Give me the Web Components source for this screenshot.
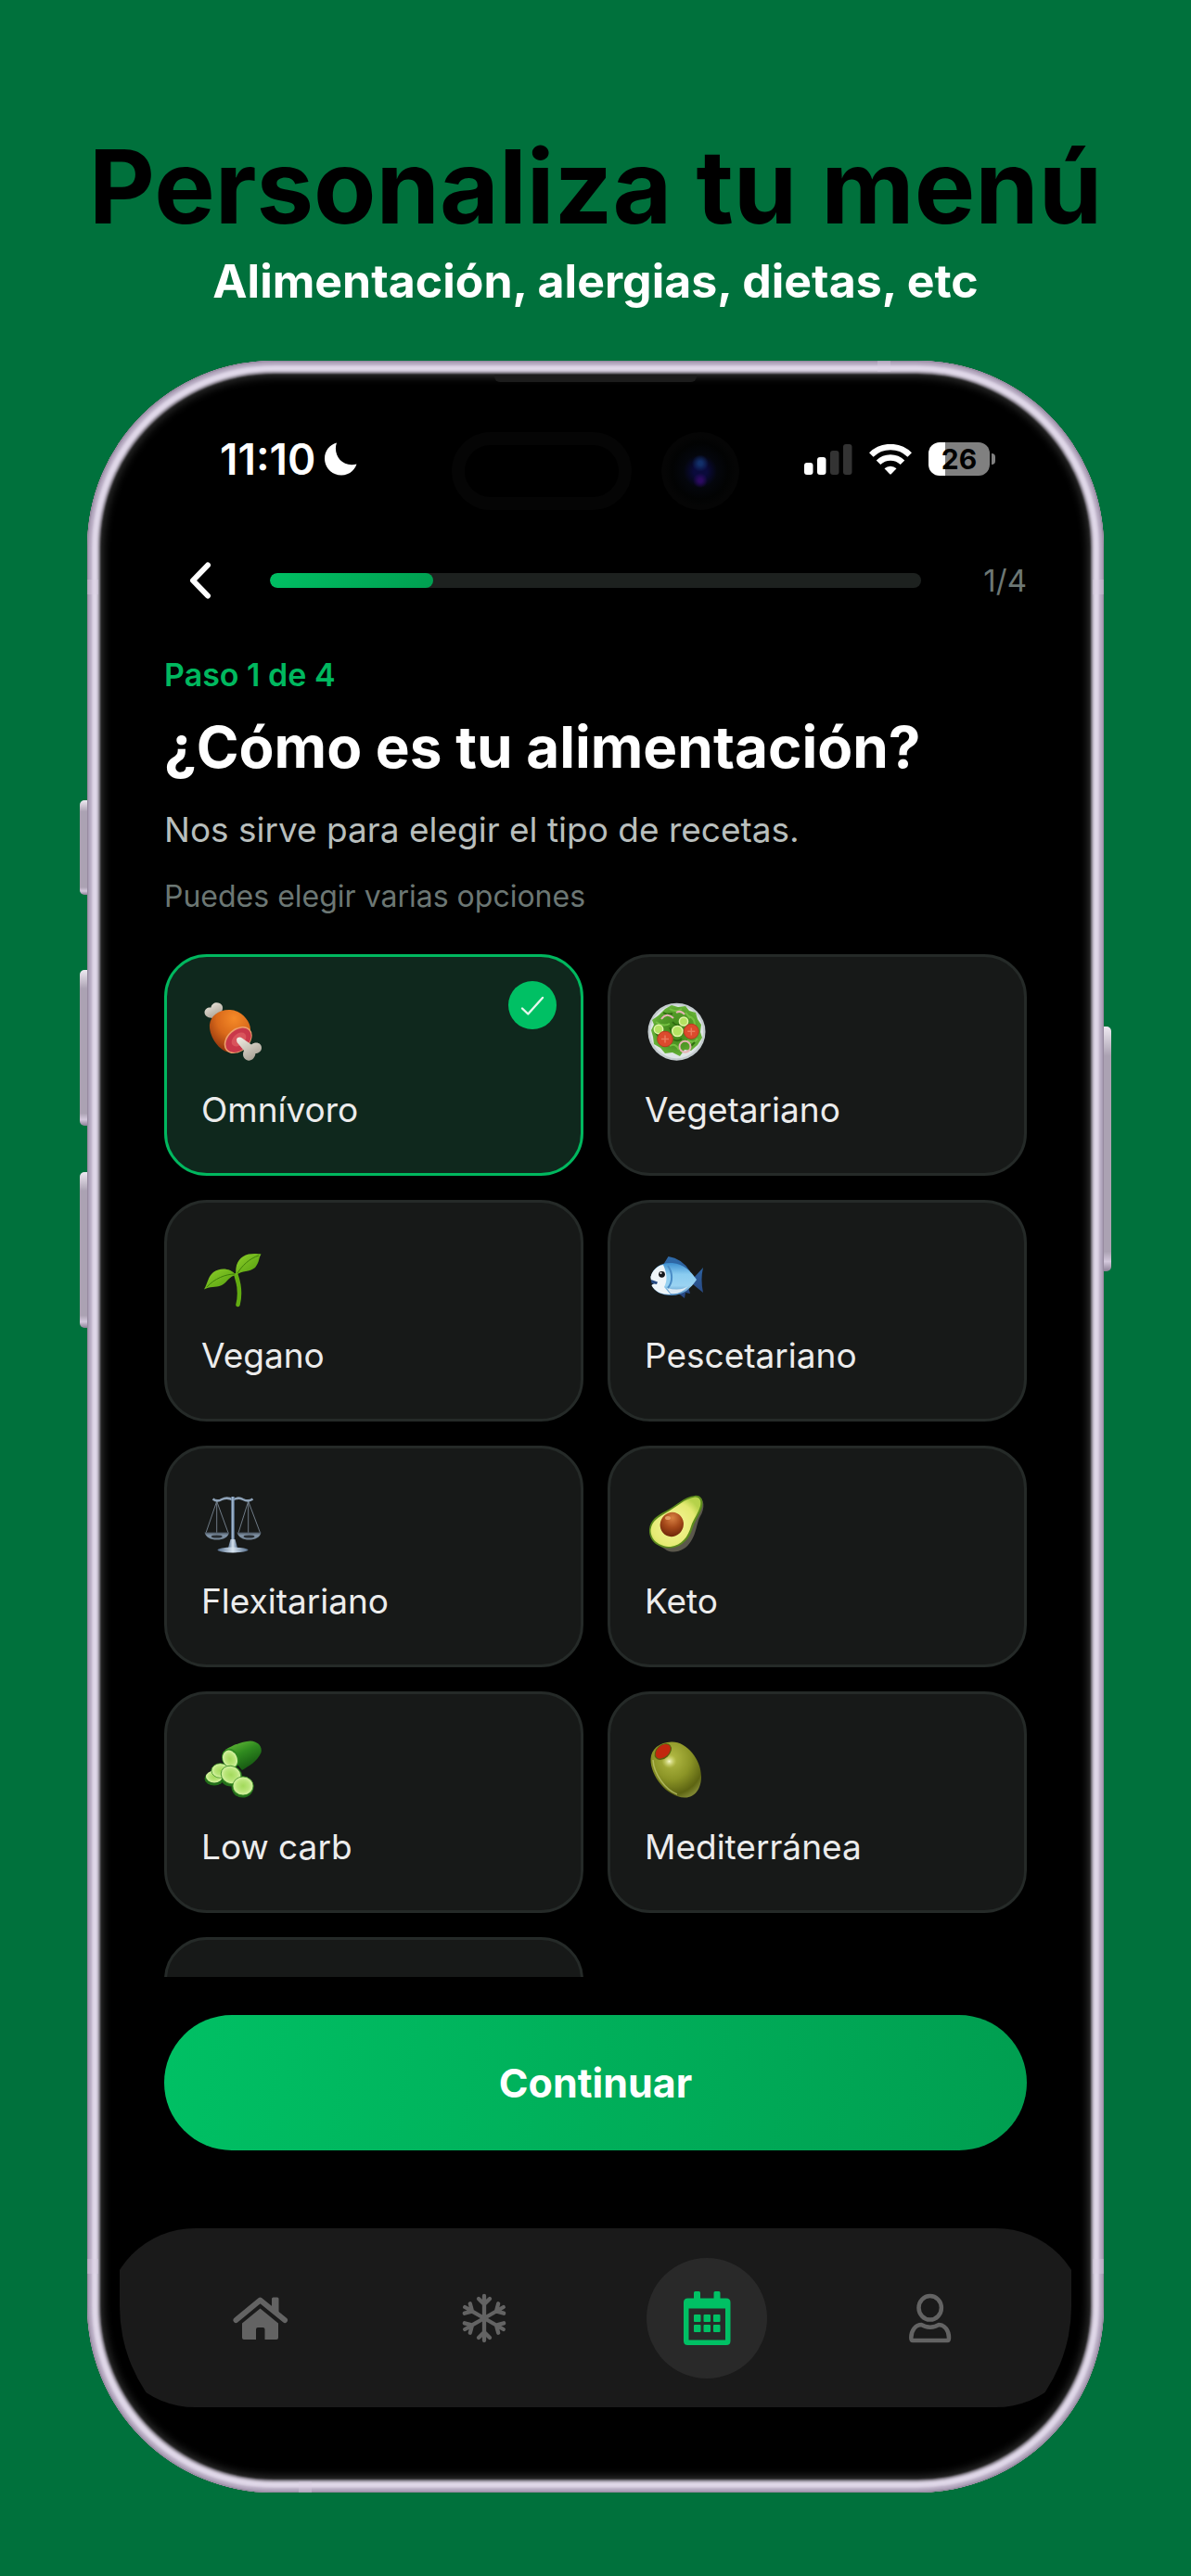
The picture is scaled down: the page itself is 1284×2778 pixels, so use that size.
<!DOCTYPE html>
<html lang="es">
<head>
<meta charset="utf-8">
<meta name="viewport" content="width=device-width, initial-scale=1">
<title>Personaliza tu menú</title>
<style>
  html, body { margin: 0; }
  body {
    min-height: 100vh;
    background: #00713c;
    color: #fff;
    font-family: Inter, "Open Sans", sans-serif;
    --green: #00c064;
    --green-deep: #009e50;
    --card: #171918;
    --line: #252a28;
    --muted: #6c7774;
  }
</style>
</head>
<body>
<promo-poster>
  <span slot="title">Personaliza tu menú</span>
  <span slot="subtitle">Alimentación, alergias, dietas, etc</span>
  <phone-frame>
    <status-bar time="11:10" battery="26"></status-bar>
    <step-header step="1" total="4"></step-header>
    <step-intro>
      <span slot="eyebrow">Paso 1 de 4</span>
      <span slot="title">¿Cómo es tu alimentación?</span>
      <span slot="lead">Nos sirve para elegir el tipo de recetas.</span>
      <span slot="hint">Puedes elegir varias opciones</span>
    </step-intro>
    <option-grid>
      <diet-option icon="meat" checked>Omnívoro</diet-option>
      <diet-option icon="salad">Vegetariano</diet-option>
      <diet-option icon="sprout">Vegano</diet-option>
      <diet-option icon="fish">Pescetariano</diet-option>
      <diet-option icon="scales">Flexitariano</diet-option>
      <diet-option icon="avocado">Keto</diet-option>
      <diet-option icon="cucumber">Low carb</diet-option>
      <diet-option icon="olive">Mediterránea</diet-option>
      <diet-option></diet-option>
    </option-grid>
    <primary-button>Continuar</primary-button>
    <tab-bar></tab-bar>
  </phone-frame>
</promo-poster>

<script>
const define = (name, html, setup) => {
  const template = document.createElement('template');
  template.innerHTML = '<style>*{box-sizing:border-box}svg{display:block}</style>' + html;
  customElements.define(name, class extends HTMLElement {
    constructor() {
      super();
      this.attachShadow({ mode: 'open' }).append(template.content.cloneNode(true));
    }
    connectedCallback() {
      if (setup && !this.ready) { this.ready = true; setup(this, this.shadowRoot); }
    }
  });
};

define('promo-poster', `
  <style>
    :host { display: block; padding: 131px 94px 90px; }
    header { text-align: center; margin: 0 -60px 54px; }
    h1 { margin: 0; font-size: 110px; line-height: 140px; font-weight: 700; color: #000; }
    p { margin: 0; font-size: 50px; line-height: 64px; font-weight: 700; }
  </style>
  <header>
    <h1><slot name="title"></slot></h1>
    <p><slot name="subtitle"></slot></p>
  </header>
  <main><slot></slot></main>
`);

define('phone-frame', `
  <style>
    :host { display: block; position: relative; }
    .body {
      position: relative;
      padding: 35px;
      border-radius: 201px;
      background: #000;
      box-shadow:
        inset 0 0 2px 1px #8d8197,
        inset 0 0 3px 5px #b3a7be,
        inset 0 0 3px 12px #e0d8e9,
        inset 0 0 2px 14px #77727c,
        inset 0 0 10px 17px #303030;
    }
    .screen {
      display: flex; flex-direction: column;
      padding: 0 48px 57px;
      border-radius: 166px;
      overflow: hidden;
    }
    .key {
      position: absolute; left: -8px; width: 9px;
      border-radius: 5px 0 0 5px;
      background: linear-gradient(#efeaf2, #aba2b3 12%, #aba2b3 92%, #d3c8dc 96%, #8d8197);
    }
    .key.right { left: auto; right: -8px; border-radius: 0 5px 5px 0; }
    .action { top: 474px; height: 102px; }
    .up { top: 657px; height: 168px; }
    .down { top: 875px; height: 168px; }
    .power { top: 718px; height: 264px; }
    .speaker {
      position: absolute; top: 15px; left: 50%; width: 218px; height: 8px;
      transform: translateX(-50%);
      border-radius: 0 0 6px 6px; background: #1c1c1c;
    }
    .band { position: absolute; background: #d9cee3; opacity: .35; }
    .band.h { width: 14px; height: 12px; }
    .band.v { width: 12px; height: 16px; }
    .island {
      position: absolute; top: 77px; left: 393px; width: 194px; height: 84px;
      border: 14px solid #050505; border-radius: 42px;
    }
    .camera {
      position: absolute; top: 77px; left: 619px; width: 84px; height: 84px;
      border-radius: 50%;
      background:
        radial-gradient(circle at 50% 40%, #12306a 0 2px, transparent 9px),
        radial-gradient(circle at 50% 62%, #2c0a60 0 2px, transparent 8px),
        radial-gradient(circle, #0a0a3c 0 7px, #04060c 18px, #020303 30px, #050505 38px);
    }
  </style>
  <i class="key action"></i><i class="key up"></i><i class="key down"></i><i class="key right power"></i>
  <div class="body">
    <i class="speaker"></i>
    <i class="band h" style="top:0;right:230px"></i>
    <i class="band h" style="bottom:0;left:228px"></i>
    <i class="band v" style="top:236px;left:0"></i>
    <i class="band v" style="top:236px;right:0"></i>
    <i class="band v" style="bottom:236px;left:0"></i>
    <i class="band v" style="bottom:236px;right:0"></i>
    <i class="island"></i><i class="camera"></i>
    <div class="screen"><slot></slot></div>
  </div>
`);

define('status-bar', `
  <style>
    :host {
      display: flex; align-items: center; justify-content: space-between;
      height: 142px; padding: 0 34px 0 60px; position: relative;
    }
    .time { display: flex; align-items: center; gap: 9px; font-size: 46px; line-height: 52px; font-weight: 600; }
    .icons { display: flex; align-items: center; gap: 18px; }
    .battery { display: flex; align-items: center; gap: 2px; }
    .cell {
      width: 66px; height: 36px; border-radius: 12px;
      background: linear-gradient(90deg, #fff 27%, #808080 27%);
      color: #000; font-size: 30px; line-height: 36px; font-weight: 700; text-align: center;
    }
    .tip { width: 4px; height: 12px; border-radius: 0 4px 4px 0; background: #808080; }
  </style>
  <div class="time"><span id="time"></span>
    <svg width="36" height="36" viewBox="0 0 36 36" aria-hidden="true"><path fill="#fff" d="M14 .5C9.500 13 19.500 27.500 35.500 23.500C33 31 26.500 35.500 19 35.500C9 35.500 1 27.500 1 17.500C1 9.500 6 2.500 14 .5Z"/></svg>
  </div>
  <div class="icons">
    <svg width="52" height="33" viewBox="0 0 52 33" aria-hidden="true">
      <rect x="0" y="20" width="9.500" height="13" rx="3" fill="#fff"/><rect x="14" y="14" width="9.500" height="19" rx="3" fill="#fff"/>
      <rect x="28" y="7" width="9.500" height="26" rx="3" fill="#333"/><rect x="42" y="0" width="9.500" height="33" rx="3" fill="#333"/>
    </svg>
    <svg width="46" height="33" viewBox="0 0 46 33" aria-hidden="true">
      <g fill="none" stroke="#fff" stroke-width="6.500"><path d="M2.300 11.500A29.700 29.700 0 0 1 43.700 11.500"/><path d="M10 19.700A18.600 18.600 0 0 1 36 19.700"/></g>
      <path fill="#fff" d="M16.500 26.300A9.600 9.600 0 0 1 29.500 26.300L24 32Q23 33 22 32Z"/>
    </svg>
    <div class="battery"><div class="cell" id="level"></div><i class="tip"></i></div>
  </div>
`, (host, root) => {
  root.getElementById('time').textContent = host.getAttribute('time');
  root.getElementById('level').textContent = host.getAttribute('battery');
});

define('step-header', `
  <style>
    :host { display: flex; align-items: center; gap: 36px; height: 120px; }
    button {
      width: 78px; height: 78px; padding: 0; border: 0; background: none;
      display: grid; place-items: center; cursor: pointer;
    }
    .track { flex: 1; height: 16px; border-radius: 8px; background: #1d211f; overflow: hidden; }
    .fill { height: 16px; border-radius: 8px; background: linear-gradient(135deg, var(--green), var(--green-deep)); }
    .count { width: 78px; text-align: right; font-size: 33px; line-height: 40px; color: var(--muted); }
  </style>
  <button type="button" aria-label="Atrás">
    <svg width="24" height="40" viewBox="0 0 24 40"><path d="M20 3.500L4 20L20 36.500" fill="none" stroke="#fff" stroke-width="6" stroke-linecap="round" stroke-linejoin="round"/></svg>
  </button>
  <div class="track" role="progressbar"><div class="fill"></div></div>
  <span class="count"></span>
`, (host, root) => {
  const step = +host.getAttribute('step'), total = +host.getAttribute('total');
  root.querySelector('.fill').style.width = (step / total * 100) + '%';
  root.querySelector('.count').textContent = step + '/' + total;
});

define('step-intro', `
  <style>
    :host { display: block; padding: 21px 0 42px; white-space: nowrap; }
    p, h2 { margin: 0; }
    .eyebrow { font-size: 34px; line-height: 42px; font-weight: 600; color: #00b85f; }
    h2 { margin-top: 17px; font-size: 62px; line-height: 80px; font-weight: 700; }
    .lead { margin-top: 25px; font-size: 37px; line-height: 48px; color: #b8bebc; }
    .hint { margin-top: 28px; font-size: 32px; line-height: 40px; color: var(--muted); }
  </style>
  <p class="eyebrow"><slot name="eyebrow"></slot></p>
  <h2><slot name="title"></slot></h2>
  <p class="lead"><slot name="lead"></slot></p>
  <p class="hint"><slot name="hint"></slot></p>
`);

define('option-grid', `
  <style>
    :host {
      display: grid; grid-template-columns: 1fr 1fr; gap: 26px;
      align-content: start;
      max-height: 1103px; overflow: hidden auto; scrollbar-width: none;
    }
  </style>
  <slot></slot>
`);

const art = {
  meat: `
    <defs>
      <radialGradient id="m1" cx=".6" cy=".2" r=".85"><stop offset="0" stop-color="#f58a28"/><stop offset=".5" stop-color="#d9691a"/><stop offset="1" stop-color="#8a2f0c"/></radialGradient>
      <linearGradient id="m2" x1="0" y1="0" x2=".6" y2="1"><stop offset="0" stop-color="#f4efe6"/><stop offset="1" stop-color="#a9a296"/></linearGradient>
    </defs>
    <path fill="url(#m2)" d="M17 19C13 21 4 20 3.500 14C3.500 10 7 8 10.500 8.500C11 4 16 2 20 4C24 6 24 11 21 14Z"/>
    <path fill="url(#m1)" d="M30 11C41 10 54 23 53 33C53 46 42 57.500 31 57C19 56 8 39 9 27C10 18 18 11 30 11Z"/>
    <ellipse cx="39.700" cy="43.500" rx="17" ry="12" transform="rotate(-42 39.700 43.500)" fill="#eda06a"/>
    <ellipse cx="40" cy="43.800" rx="15.600" ry="10.800" transform="rotate(-42 40 43.800)" fill="#c9384a"/>
    <ellipse cx="40.500" cy="43" rx="9" ry="6" transform="rotate(-42 40.500 43)" fill="#d9545c"/>
    <path fill="url(#m2)" d="M38 43C39 40 42 40 44 41.500L54 48.500C59 44.500 65 47 65 52C65 56 61 58 58.500 58C58 63 54 66.500 50 65.500C45 64 44 59 46 55L38.500 46Z"/>`,
  salad: `
    <defs><radialGradient id="s1"><stop offset="0" stop-color="#3e8417"/><stop offset=".7" stop-color="#529b28"/><stop offset="1" stop-color="#67b338"/></radialGradient></defs>
    <circle cx="34.500" cy="34.700" r="31" fill="#c4ccce"/><circle cx="34.500" cy="34.700" r="28.500" fill="#dfe5e6"/>
    <path fill="url(#s1)" d="M22 10L29 6L36 8L44 7L48 12L55 14L57 21L61 27L60 35L62 41L57 49L50 55L43 54L38 61L30 57L22 58L17 52L10 48L9 40L7 33L10 27L8 22L15 17Z"/>
    <g fill="none" stroke="#74c041" stroke-width="2"><path d="M27 10Q33 14 40 10M48 18Q54 20 54 27M12 24Q20 30 27 26M27 50Q33 46 37 54M46 44Q54 48 57 42M44 14L49 20"/></g>
    <g fill="none" stroke="#2f6d10" stroke-width="2"><path d="M20 14Q25 17 30 15M30 24Q34 29 38 27M12 36L16 41M31 43Q36 46 40 42M50 50L54 46M27 30L30 36"/></g>
    <g fill="none" stroke="#e6b4b4" stroke-width="2"><path d="M18 21Q24 13 31 20M34 14Q39 11 43 16"/><circle cx="43.500" cy="50.700" r="6"/></g>
    <g fill="#b4e262" stroke="#e2f5a6" stroke-width="1.500"><circle cx="15" cy="32" r="4.700"/><circle cx="35.300" cy="34" r="5.600"/><circle cx="42" cy="23.500" r="4.600"/></g>
    <g fill="#dc4a2d" stroke="#b93a20" stroke-width="1"><circle cx="22" cy="42.500" r="8.300"/><circle cx="50.300" cy="34.300" r="8"/></g>
    <g stroke="#ea7a5c" stroke-width="1.500"><path d="M22 38.500V46.500M18 42.500H26M50.300 30.500V38.500M46.300 34.300H54.300"/></g>`,
  sprout: `
    <defs><linearGradient id="p1" x1="0" y1="0" x2="1" y2="1"><stop offset="0" stop-color="#8fd12b"/><stop offset="1" stop-color="#4f9a0c"/></linearGradient></defs>
    <path d="M37.500 32C41 42 42 54 39.500 64" fill="none" stroke="#63ad12" stroke-width="4.500" stroke-linecap="round"/>
    <path fill="url(#p1)" d="M37.500 32C36 20 41 12 51 9.500C56 8.500 61 9 64.500 9.500C61.500 14 63 18 58 24C52 29 44 27 37.500 32Z"/>
    <path fill="url(#p1)" d="M37.500 32C31 24 20 24 13 29C7 34 7 41 3 47.500C9 44 15 46 22 43C28 40 30 33 37.500 32Z"/>
    <g fill="none" stroke="#3f800a" stroke-width="1"><path d="M39 30C44 22 52 14 62 11M36 31C26 31 14 36 6 45"/></g>`,
  fish: `
    <defs>
      <linearGradient id="f1" x1="0" y1="0" x2="0" y2="1"><stop offset="0" stop-color="#3d8fd0"/><stop offset=".35" stop-color="#8accf0"/><stop offset=".7" stop-color="#9ad3f2"/><stop offset="1" stop-color="#4a86bd"/></linearGradient>
      <linearGradient id="f2" x1="0" y1="0" x2="0" y2="1"><stop offset="0" stop-color="#2f6cab"/><stop offset="1" stop-color="#27447e"/></linearGradient>
    </defs>
    <path fill="url(#f2)" d="M52 36L63 24Q60 37 63 51L52 42ZM20 21L25.500 12Q40 14 49 28ZM34 50L43 57L44 51L49 52L47 45Z"/>
    <path fill="url(#f1)" d="M6.500 34C9 24 18 18 30 19C42 20 50 28 56 37C50 46 42 54 29 54C18 54 11 50 7.500 43L12 40L7 38Z"/>
    <path fill="#eef5f9" d="M6.500 34C8 28 13 22 20 21C24 30 25 38 21 45L28 53C18 53 11 50 7.500 43L12 40L7 38Z"/>
    <path fill="#dce9f3" d="M24 46Q38 50 47 44Q38 54 28 52Z"/>
    <path d="M25 22C30 29 31 39 25 46" fill="none" stroke="#4a8cc6" stroke-width="2"/>
    <path fill="#264a82" d="M7 37L14 39.500L13 42L7.500 41Z"/><circle cx="18.500" cy="31.300" r="3.400" fill="#15171b"/><circle cx="17.500" cy="30" r="1" fill="#fff"/>`,
  scales: `
    <defs>
      <linearGradient id="b1" x1="0" y1="0" x2="1" y2="0"><stop offset="0" stop-color="#536c8a"/><stop offset=".5" stop-color="#d7e4f0"/><stop offset="1" stop-color="#536c8a"/></linearGradient>
      <linearGradient id="b2" x1="0" y1="0" x2="0" y2="1"><stop offset="0" stop-color="#47525d"/><stop offset=".4" stop-color="#8193a6"/><stop offset="1" stop-color="#6f8091"/></linearGradient>
    </defs>
    <g fill="none" stroke="#6f7b87" stroke-width="1"><path d="M16.700 11L5 45M16.700 11V45M16.700 11L29 45M50.700 11L40 45M50.700 11V45M50.700 11L63.500 45"/></g>
    <path d="M12.500 8.500Q17 12 22 9Q28 6 34 9.500Q40 6 45 9Q51 12 55.500 8.500" fill="none" stroke="#8fa3b8" stroke-width="2.500"/>
    <path fill="#6d88a8" d="M32.300 6H35.700V54H32.300Z"/><path fill="#a9bed3" d="M33.200 6H34.500V54H33.200Z"/>
    <path fill="url(#b1)" d="M31.500 52H36.500L39 61H29Z"/><ellipse cx="34" cy="63.500" rx="16.500" ry="2.900" fill="url(#b1)"/>
    <path fill="url(#b2)" d="M3.500 44.500H30C29 50 24 52.500 16.700 52.500C10 52.500 5 50 3.500 44.500ZM38.500 44.500H64.500C63.500 50 58 52.500 51.500 52.500C45 52.500 40 50 38.500 44.500Z"/>
    <ellipse cx="16.700" cy="49" rx="6" ry="1.600" fill="#272c31"/><ellipse cx="51.500" cy="49" rx="6" ry="1.600" fill="#272c31"/>`,
  avocado: `
    <defs>
      <radialGradient id="a1" cx=".45" cy=".55" r=".6"><stop offset="0" stop-color="#f7f59a"/><stop offset=".75" stop-color="#e4ea72"/><stop offset="1" stop-color="#b6d24a"/></radialGradient>
      <radialGradient id="a2" cx=".4" cy=".25" r=".8"><stop offset="0" stop-color="#d98243"/><stop offset=".5" stop-color="#a5491a"/><stop offset="1" stop-color="#6b2408"/></radialGradient>
    </defs>
    <path fill="#5b584c" d="M57 5.500C65 8 65 19 60 27C56 34 56 45 50 54C44 64 33 68 24 64L12 56Z"/>
    <path fill="#5b8a1c" d="M54 5C60 4 64 9 62 17C60 25 55 30 52 39C49 50 42 60 28 61.500C14 62 4 53 5 41C6 31 14 26 22 22C34 16 42 6 54 5Z"/>
    <path fill="url(#a1)" d="M54 6.500C59 6 61.500 10 60 16C58 24 53 29 50 38C47 49 40 58.500 28 60C15 60 6 52 6.500 41.500C8 32 15 28 23 23.500C35 17 43 8 54 6.500Z"/>
    <ellipse cx="29.300" cy="36" rx="12.500" ry="13.300" transform="rotate(25 29.300 36)" fill="url(#a2)"/>
    <ellipse cx="25" cy="29" rx="3" ry="2" fill="#eba972" opacity=".8"/>`,
  cucumber: `
    <defs>
      <linearGradient id="c1" x1=".1" y1="0" x2=".7" y2="1"><stop offset="0" stop-color="#69bf3b"/><stop offset=".45" stop-color="#2f8a1f"/><stop offset="1" stop-color="#125010"/></linearGradient>
      <radialGradient id="c2"><stop offset="0" stop-color="#a3da5b"/><stop offset=".6" stop-color="#b8e579"/><stop offset="1" stop-color="#d9f3a6"/></radialGradient>
    </defs>
    <path fill="url(#c1)" d="M26 14C34 9 44 5 53 4.500C61 5 66 10 64.500 17C60 27 52 31 44 36Z"/>
    <ellipse cx="31.500" cy="23.500" rx="9" ry="11" transform="rotate(-25 31.500 23.500)" fill="#2f8a1f"/>
    <ellipse cx="31" cy="24" rx="7.600" ry="9.700" transform="rotate(-25 31 24)" fill="url(#c2)"/>
    <g fill="#23701a"><ellipse cx="14" cy="45" rx="10.500" ry="7.500"/><ellipse cx="20.500" cy="38" rx="10.500" ry="9"/><ellipse cx="32" cy="42.500" rx="12" ry="11"/><ellipse cx="44.500" cy="54" rx="12" ry="11.500"/></g>
    <ellipse cx="14" cy="43" rx="9" ry="6.500" fill="url(#c2)"/>
    <ellipse cx="20.500" cy="36.500" rx="9.500" ry="7.800" fill="url(#c2)" stroke="#3d8e25" stroke-width=".8"/>
    <ellipse cx="32" cy="41" rx="11" ry="9.500" transform="rotate(25 32 41)" fill="url(#c2)" stroke="#3d8e25" stroke-width=".8"/>
    <ellipse cx="45" cy="53" rx="11" ry="10" fill="url(#c2)" stroke="#3d8e25" stroke-width=".8"/>`,
  olive: `
    <defs>
      <radialGradient id="o1" cx=".42" cy=".3" r=".75"><stop offset="0" stop-color="#b3bb45"/><stop offset=".5" stop-color="#8b9426"/><stop offset=".85" stop-color="#5d6412"/><stop offset="1" stop-color="#7d8530"/></radialGradient>
      <radialGradient id="o2"><stop offset="0" stop-color="#fdffd8" stop-opacity=".9"/><stop offset="1" stop-color="#d6dc70" stop-opacity="0"/></radialGradient>
    </defs>
    <path fill="url(#o1)" d="M29 5.500C45 5 61 24 61 43C61 56 54 66 43 65.500C24 65 6 42 6.500 24C7 13 16 6 29 5.500Z"/>
    <path d="M9 25C10 40 22 57 35 62" fill="none" stroke="#c3ca73" stroke-width="1.500" opacity=".7"/>
    <ellipse cx="26.500" cy="26.500" rx="8" ry="7.500" fill="url(#o2)"/>
    <ellipse cx="19.800" cy="16" rx="10.500" ry="7.300" transform="rotate(-42 19.800 16)" fill="#59600f"/>
    <ellipse cx="19.800" cy="15.700" rx="9.300" ry="6.200" transform="rotate(-42 19.800 15.700)" fill="#c2280e"/>`
};

define('diet-option', `
  <style>
    :host { display: block; }
    label {
      position: relative; display: flex; flex-direction: column; gap: 27px;
      height: 239px; padding: 46px 37px;
      border: 3px solid var(--line); border-radius: 46px; background: var(--card);
      font-size: 37px; line-height: 48px; color: #ececec; cursor: pointer;
    }
    label:has(input:checked) { background: #0f281d; border-color: #00b85f; }
    svg { flex: none; }
    .art { width: 68px; height: 68px; }
    input { position: absolute; top: 26px; right: 26px; width: 52px; height: 52px; margin: 0; opacity: 0; }
    .badge { position: absolute; top: 26px; right: 26px; visibility: hidden; }
    input:checked + .badge { visibility: visible; }
  </style>
  <label>
    <svg class="art" viewBox="0 0 68 68" aria-hidden="true"></svg>
    <span><slot></slot></span>
    <input type="checkbox">
    <svg class="badge" width="52" height="52" viewBox="0 0 52 52" aria-hidden="true">
      <circle cx="26" cy="26" r="26" fill="#00c064"/>
      <path d="M15 29.500L21.300 35.500L37 18" fill="none" stroke="#e6f7ee" stroke-width="2.400" stroke-linecap="round" stroke-linejoin="round"/>
    </svg>
  </label>
`, (host, root) => {
  root.querySelector('.art').innerHTML = art[host.getAttribute('icon')] || '';
  root.querySelector('input').checked = host.hasAttribute('checked');
});

define('primary-button', `
  <style>
    :host { display: block; padding: 41px 0 84px; }
    button {
      display: block; width: 100%; height: 146px; padding: 0; border: 0; border-radius: 73px;
      background: linear-gradient(100deg, var(--green), var(--green-deep));
      color: #fff; font: 700 43px/52px Inter, "Open Sans", sans-serif; cursor: pointer;
    }
  </style>
  <button type="button"><slot></slot></button>
`);

define('tab-bar', `
  <style>
    :host { display: block; margin: 0 -63px; }
    nav {
      display: grid; grid-template-columns: repeat(4, 1fr); align-items: center; justify-items: center;
      height: 193px; padding: 0 47px; border-radius: 97px; background: #1a1a1a;
    }
    a { display: grid; place-items: center; width: 130px; height: 130px; border-radius: 50%; color: #636363; }
    a[aria-current] { background: #292929; color: var(--green); }
  </style>
  <nav>
    <a href="#inicio" aria-label="Inicio">
      <svg width="60" height="48" viewBox="0 0 60 48"><path d="M3.500 26L29.500 4.500L56 26" fill="none" stroke="currentColor" stroke-width="6" stroke-linecap="round" stroke-linejoin="round"/><path fill="currentColor" d="M42 3Q42 1.500 43.500 1.500H48Q49.500 1.500 49.500 3V20L42 14ZM29.500 13.500L49 29.500V45Q49 47 47 47H34.500V36Q34.500 34 32.500 34H27Q25 34 25 36V47H12Q10 47 10 45V29.500Z"/></svg>
    </a>
    <a href="#congelador" aria-label="Congelador">
      <svg width="50" height="54" viewBox="-25 -27 50 54"><g fill="none" stroke="currentColor" stroke-width="4.300" stroke-linecap="round">
        <path id="arm" d="M0 0V-24M-6 -21L0 -15L6 -21"/>
        <use href="#arm" transform="rotate(60)"/><use href="#arm" transform="rotate(120)"/><use href="#arm" transform="rotate(180)"/><use href="#arm" transform="rotate(240)"/><use href="#arm" transform="rotate(300)"/>
      </g></svg>
    </a>
    <a href="#menu" aria-label="Menú" aria-current="page">
      <svg width="52" height="62" viewBox="0 0 52 62"><path fill="currentColor" fill-rule="evenodd" d="M12 3.500Q12 2 13.500 2H17.500Q19 2 19 3.500V9.500H33.500V3.500Q33.500 2 35 2H39Q40.500 2 40.500 3.500V9.500H47Q51.500 9.500 51.500 14V55.500Q51.500 60 47 60H5.500Q1 60 1 55.500V14Q1 9.500 5.500 9.500H12ZM6.500 20.500V54.500H46V20.500Z"/>
      <g fill="currentColor"><rect x="12" y="27" width="7.500" height="8" rx="1"/><rect x="22.500" y="27" width="7.500" height="8" rx="1"/><rect x="33" y="27" width="7.500" height="8" rx="1"/><rect x="12" y="38" width="7.500" height="8" rx="1"/><rect x="22.500" y="38" width="7.500" height="8" rx="1"/><rect x="33" y="38" width="7.500" height="8" rx="1"/></g></svg>
    </a>
    <a href="#perfil" aria-label="Perfil">
      <svg width="48" height="54" viewBox="0 0 48 54"><g fill="none" stroke="currentColor" stroke-width="4.500" stroke-linejoin="round"><ellipse cx="23.700" cy="15.800" rx="12.200" ry="12.800"/><path d="M14.500 34C19 37.500 28.500 37.500 33 34C39.500 34 44 40.500 44 48Q44 51 42.500 51H5Q3.300 51 3.300 48C3.300 40.500 8 34 14.500 34Z"/></g></svg>
    </a>
  </nav>
`);
</script>
</body>
</html>
